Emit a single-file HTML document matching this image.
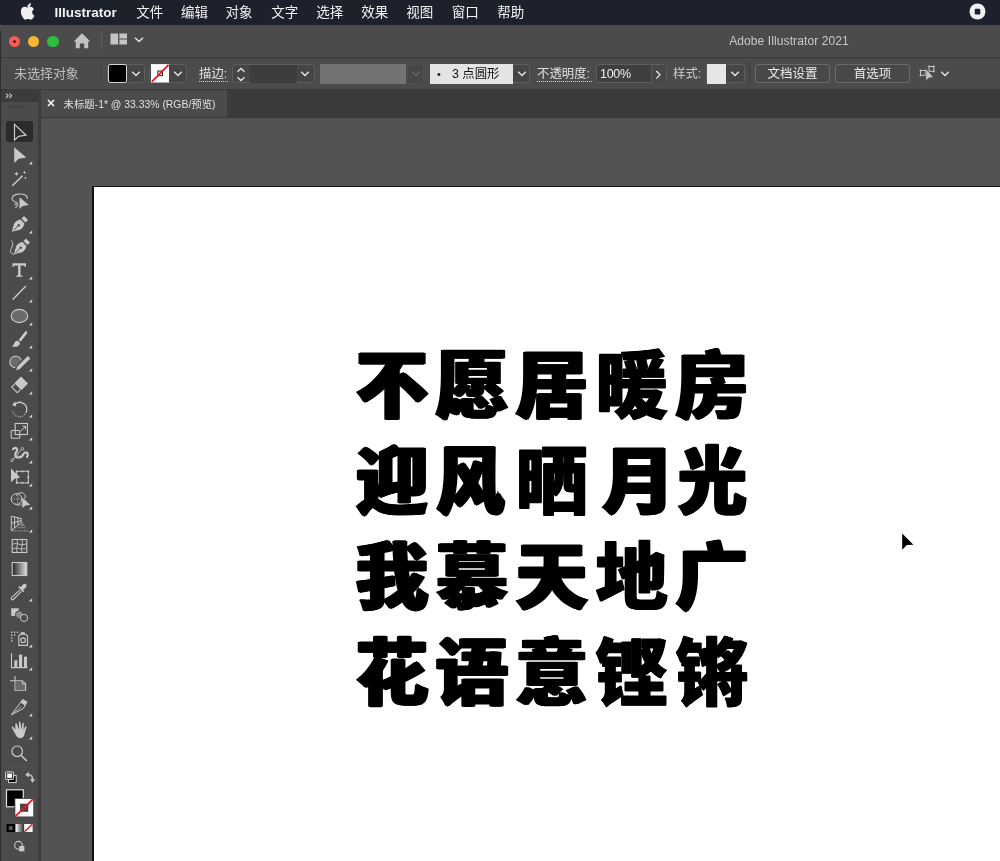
<!DOCTYPE html>
<html lang="zh-CN">
<head>
<meta charset="utf-8">
<title>Adobe Illustrator 2021</title>
<style>
*{box-sizing:border-box;margin:0;padding:0}
html,body{width:1000px;height:861px;overflow:hidden;background:#535353}
body{position:relative;font-family:"Liberation Sans","Noto Sans CJK SC",sans-serif;color:#d6d6d6;-webkit-font-smoothing:antialiased}
.abs{position:absolute}
#menubar,#titlebar,#ctrl,#tabbar,.line{will-change:transform}
/* ---------- mac menu bar ---------- */
#menubar{position:absolute;left:0;top:0;width:1000px;height:24.600px;background:#1c212b;z-index:5}
#menubar span{position:absolute;top:1px;height:24px;line-height:23px;font-size:13.500px;color:#f2f2f2;white-space:nowrap}
#menubar .app{font-weight:bold;font-size:13.500px;top:.8px}
/* ---------- window title bar ---------- */
#titlebar{position:absolute;left:0;top:24px;width:1000px;height:34px;background:#4b4b4b;border-top-left-radius:6px;border-bottom:1px solid #3b3b3b}
#titlebar .tl{position:absolute;top:11.800px;width:11.600px;height:11.600px;border-radius:50%}
#apptitle{position:absolute;left:689px;top:.6px;width:200px;height:33px;line-height:32px;text-align:center;font-size:12px;color:#c9c9c9;letter-spacing:.1px}
/* ---------- control bar ---------- */
#ctrl{position:absolute;left:0;top:58px;width:1000px;height:32px;background:#4b4b4b;border-top:1px solid #4b4b4b;border-bottom:1px solid #3b3b3b}
#ctrl .t{position:absolute;top:.5px;height:30px;line-height:29px;font-size:12px;color:#cfcfcf;white-space:nowrap}
#ctrl .box{position:absolute;top:4.500px;height:19.500px;border:1px solid #5e5e5e;border-radius:3px;background:#454545}
#ctrl .btn{position:absolute;top:4.700px;height:19.600px;border:1px solid #6a6a6a;border-radius:3px;background:#484848;color:#eaeaea;font-size:12.5px;line-height:18px;text-align:center}
.chev{position:absolute;width:10px;height:6px}
/* ---------- tab bar ---------- */
#tabbar{position:absolute;left:38px;top:90px;width:962px;height:28px;background:#3b3b3b}
#tab{position:absolute;left:3px;top:0;width:186px;height:27px;background:#4b4b4b;font-size:10.400px;line-height:27px;color:#e0e0e0;white-space:nowrap}
/* ---------- tools ---------- */
#tools{position:absolute;left:0;top:90px;width:41px;height:771px;background:#4b4b4b;border-left:1px solid #3b3b3b;border-right:3px solid #3d3d3d}
#tools .hd{position:absolute;left:0;top:0;width:37px;height:11.500px;background:#3b3b3b}
/* ---------- canvas ---------- */
#canvas{position:absolute;left:41px;top:118px;width:959px;height:743px;background:#535353}
#artboard{position:absolute;left:92.400px;top:186px;width:920px;height:700px;background:#111}
#artboard i{position:absolute;left:1.400px;top:1.100px;width:920px;height:700px;background:#fff}
.line{position:absolute;left:355.5px;white-space:nowrap;font-family:"Liberation Sans","Noto Sans CJK SC",sans-serif;font-weight:900;font-size:72px;line-height:96px;height:96px;color:#000;letter-spacing:7.9px;-webkit-text-stroke:.8px #000}
.line span{text-shadow:1px 0 0 #000,-1px 0 0 #000,2px 0 0 #000,-2px 0 0 #000}
.line .v{-webkit-text-stroke-width:1px;text-shadow:1px 0 0 #000,-1px 0 0 #000}.line .h{-webkit-text-stroke-width:1.200px}.line .m{-webkit-text-stroke-width:.8px}.line .l{-webkit-text-stroke-width:.4px}
</style>
</head>
<body>
<div id="canvas"></div>
<div id="artboard"><i></i></div>
<div class="line" style="top:338.400px;transform:scaleY(1.03);transform-origin:50% 47.600%"><span class="h">不</span><span class="l">愿</span><span class="m">居</span><span class="v">暖</span><span class="m">房</span></div>
<div class="line" style="top:433.900px;transform:scaleY(1.025);transform-origin:50% 47.600%"><span class="h">迎</span><span class="h" style="display:inline-block;transform:scaleX(.94);transform-origin:8% 50%">风</span><span class="v">晒</span><span class="h" style="position:relative;left:6.5px">月</span><span class="h" style="display:inline-block;transform:scaleX(.95);transform-origin:55% 50%">光</span></div>
<div class="line" style="top:530.300px;transform:scaleY(1.012);transform-origin:50% 47.600%"><span class="h">我</span><span class="l">慕</span><span class="h">天</span><span class="v">地</span><span class="h">广</span></div>
<div class="line" style="top:625.600px;transform:scaleY(1.012);transform-origin:50% 47.600%"><span class="h">花</span><span class="m">语</span><span class="l">意</span><span class="v">铿</span><span class="v">锵</span></div>

<svg class="abs" style="left:895px;top:528px" width="24" height="28" viewBox="895 528 24 28"><path d="M902.200 533.600V549.700L906.900 545 913.400 544.800z" fill="#000"/></svg>

<div id="menubar">
  <svg class="abs" style="left:20.400px;top:2.600px" width="16.200" height="18.400" viewBox="0 0 15 17"><path fill="#f0f0f0" d="M10.1 0.3c.1 1-.3 1.9-.9 2.6-.6.7-1.500 1.200-2.400 1.100-.1-.900.300-1.900.900-2.500.600-.700 1.600-1.200 2.400-1.200zM12.900 5.700c-.100.100-1.600.900-1.600 2.800 0 2.200 1.900 2.900 2 3-.000.100-.300 1.100-1 2.100-.600.900-1.300 1.800-2.300 1.800-1 0-1.300-.600-2.400-.600-1.200 0-1.500.600-2.500.600-1 0-1.700-.900-2.300-1.800C1.600 12.100.800 9.800.800 7.700c0-3 1.900-4.200 3.600-4.200 1 0 1.900.700 2.500.700.600 0 1.600-.700 2.800-.700.400 0 2 .100 3.200 2.200z"/></svg>
  <svg class="abs" style="left:969px;top:3px" width="17" height="17" viewBox="0 0 17 17"><circle cx="8.500" cy="8.500" r="8" fill="#eef0f2"/><rect x="5.700" y="5.800" width="5.600" height="5.600" rx="1.200" fill="#1c212b"/></svg>
  <span class="app" style="left:54.500px">Illustrator</span>
  <span style="left:136.3px">文件</span>
  <span style="left:181px">编辑</span>
  <span style="left:225.5px">对象</span>
  <span style="left:271.3px">文字</span>
  <span style="left:316.3px">选择</span>
  <span style="left:361.3px">效果</span>
  <span style="left:406.3px">视图</span>
  <span style="left:451.8px">窗口</span>
  <span style="left:497.3px">帮助</span>
</div>

<div id="titlebar">
  <div class="tl" style="left:8.850px;background:#ee5f58"></div>
  <div class="tl" style="left:27.900px;background:#f6b62d"></div>
  <div class="tl" style="left:47.200px;background:#2bbd3f"></div>
  <div class="abs" style="left:12.900px;top:15.900px;width:3.500px;height:3.500px;border-radius:50%;background:#7a0c08"></div>
  <svg class="abs" style="left:73px;top:9px" width="18" height="16" viewBox="0 0 18 16"><path fill="#c2c2c2" d="M9 .3 17.300 8.400h-2.100v6.800h-4v-4.800H6.800v4.800h-4V8.400H.700z"/></svg>
  <div class="abs" style="left:101px;top:7px;width:1px;height:19px;background:#5c5c5c"></div>
  <svg class="abs" style="left:110px;top:9px" width="18" height="13" viewBox="0 0 18 13"><g fill="#c4c4c4"><rect x=".5" y=".5" width="7.600" height="11"/><rect x="9.400" y=".5" width="7.600" height="5"/><rect x="9.400" y="6.500" width="7.600" height="5"/></g></svg>
  <svg class="abs chev" style="left:134px;top:13px" viewBox="0 0 10 6"><path d="M1 .8 5 4.600 9 .8" fill="none" stroke="#e6e6e6" stroke-width="1.400"/></svg>
  <div id="apptitle">Adobe Illustrator 2021</div>
</div>

<div id="ctrl">
  <div class="abs" style="left:6px;top:6px;width:1px;height:19px;background:repeating-linear-gradient(#3c3c3c 0 1px,transparent 1px 2px)"></div>
  <span class="t" style="left:14.300px;top:-.2px;color:#bdbdbd;font-size:12.900px">未选择对象</span>
  <div class="abs" style="left:101px;top:5px;width:1px;height:21px;background:repeating-linear-gradient(#404040 0 1px,transparent 1px 2px)"></div>

  <div class="box" style="left:107px;width:38px"></div>
  <div class="abs" style="left:108.300px;top:5px;width:18.800px;height:18.800px;background:#000;border:1.300px solid #d2d2d2;border-radius:2px"></div>
  <svg class="abs chev" style="left:131px;top:12px" viewBox="0 0 10 6"><path d="M1.200 .8 5 4.500 8.800 .8" fill="none" stroke="#e6e6e6" stroke-width="1.400"/></svg>
  <div class="box" style="left:149px;width:38px"></div>
  <svg class="abs" style="left:150.800px;top:5px" width="18.400" height="18.600" viewBox="0 0 20 20"><rect width="20" height="20" fill="#fff"/><rect x="7.500" y="7.500" width="5" height="5" fill="none" stroke="#333" stroke-width="1.200"/><path d="M1 19 19 1" stroke="#f0141e" stroke-width="2"/></svg>
  <svg class="abs chev" style="left:173px;top:12px" viewBox="0 0 10 6"><path d="M1.200 .8 5 4.500 8.800 .8" fill="none" stroke="#e6e6e6" stroke-width="1.400"/></svg>

  <span class="t" style="left:199px;font-size:12.400px;color:#e0e0e0">描边:</span>
  <div class="abs" style="left:199px;top:22px;width:29px;height:1px;background:repeating-linear-gradient(90deg,#d0d0d0 0 1px,transparent 1px 2px)"></div>
  <div class="box" style="left:232px;width:83px"></div>
  <svg class="abs" style="left:236px;top:8px" width="10" height="15" viewBox="0 0 10 15"><path d="M1.500 4.800 5 1.500 8.500 4.800M1.500 10.200 5 13.500 8.500 10.200" fill="none" stroke="#e6e6e6" stroke-width="1.300"/></svg>
  <div class="abs" style="left:250px;top:6px;width:47px;height:18px;background:repeating-linear-gradient(90deg,#404040 0 1px,#3a3a3a 1px 2px)"></div>
  <svg class="abs chev" style="left:300px;top:12px" viewBox="0 0 10 6"><path d="M1.200 .8 5 4.500 8.800 .8" fill="none" stroke="#e6e6e6" stroke-width="1.400"/></svg>

  <div class="abs" style="left:320px;top:5px;width:86px;height:20px;background:#737373"></div>
  <div class="abs" style="left:407px;top:5px;width:17px;height:20px;background:#474747;border:1px dotted #565656"></div>
  <svg class="abs chev" style="left:411px;top:12px" viewBox="0 0 10 6"><path d="M1.200 .8 5 4.500 8.800 .8" fill="none" stroke="#666" stroke-width="1.400"/></svg>

  <div class="abs" style="left:430px;top:5px;width:83px;height:20px;background:#e4e4e4;color:#111;font-size:12.400px;line-height:19px;white-space:nowrap"><span class="abs" style="left:7px;top:.6px;font-size:11px">•</span><span class="abs" style="left:22px;top:1px">3 点圆形</span></div>
  <div class="box" style="left:513px;width:17px;border-radius:0 3px 3px 0;border-left:none"></div>
  <svg class="abs chev" style="left:517px;top:12px" viewBox="0 0 10 6"><path d="M1.200 .8 5 4.500 8.800 .8" fill="none" stroke="#e6e6e6" stroke-width="1.400"/></svg>

  <span class="t" style="left:537px;font-size:12.400px;color:#e0e0e0">不透明度:</span>
  <div class="abs" style="left:537px;top:22px;width:55px;height:1px;background:repeating-linear-gradient(90deg,#d0d0d0 0 1px,transparent 1px 2px)"></div>
  <div class="box" style="left:596px;width:71px;background:#3f3f3f"></div>
  <div class="abs" style="left:651px;top:6px;width:15px;height:18px;background:#474747;border-left:1px solid #5a5a5a"></div>
  <span class="t" style="left:600px;color:#f0f0f0;font-size:12.500px;letter-spacing:-.3px">100%</span>
  <svg class="abs" style="left:654.500px;top:10.500px" width="7" height="10" viewBox="0 0 7 10"><path d="M1.300 1 5 4.800 1.300 8.600" fill="none" stroke="#e6e6e6" stroke-width="1.300"/></svg>

  <span class="t" style="left:673px;font-size:12.400px;color:#c8c8c8">样式:</span>
  <div class="box" style="left:706px;width:39px"></div>
  <div class="abs" style="left:707px;top:5px;width:19px;height:20px;background:#e6e6e6"></div>
  <svg class="abs chev" style="left:730px;top:12px" viewBox="0 0 10 6"><path d="M1.200 .8 5 4.500 8.800 .8" fill="none" stroke="#e6e6e6" stroke-width="1.400"/></svg>
  <div class="abs" style="left:749px;top:4px;width:1px;height:22px;background:#3c3c3c"></div>

  <div class="btn" style="left:755px;width:75px">文档设置</div>
  <div class="btn" style="left:835px;width:75px">首选项</div>
  <svg class="abs" style="left:919px;top:6px" width="18" height="18" viewBox="0 0 18 18"><g fill="none" stroke="#c8c8c8" stroke-width="1"><rect x="1.500" y="5.500" width="4.800" height="4.800"/><rect x="10" y="1.500" width="4.800" height="4.800"/><path d="M.3 5.500H1.500M1.500 4.300V5.500M.3 10.300H1.500M1.500 10.300V11.500M6.300 4.300V5.500M8.800 1.500H10M10 .3V1.500M14.800 .3V1.500M14.800 1.500H16M14.800 6.300H16M14.800 6.300V7.500" stroke-width=".8"/></g><path d="M6.900 3.800V15.800L10 12.700 14.300 12.200z" fill="#c8c8c8" stroke="#4b4b4b" stroke-width=".5"/></svg>
  <svg class="abs chev" style="left:940px;top:12px" viewBox="0 0 10 6"><path d="M1.200 .8 5 4.500 8.800 .8" fill="none" stroke="#e6e6e6" stroke-width="1.400"/></svg>
</div>

<div id="tabbar"><div id="tab"><svg class="abs" style="left:5.700px;top:9.300px" width="8" height="8" viewBox="0 0 8 8"><path d="M1 1 7 7M7 1 1 7" stroke="#f4f4f4" stroke-width="1.700"/></svg><span style="position:absolute;left:22.500px;top:.5px">未标题-1* @ 33.33% (RGB/预览)</span></div></div>

<div id="tools"><div class="hd"></div></div>
<div class="abs" style="left:0;top:31px;width:1px;height:830px;background:#2e2e2e"></div>
<svg class="abs" style="left:0;top:0" width="38" height="861" viewBox="0 0 38 861"><defs><linearGradient id="gr" x1="0" x2="1" y1="0" y2="0"><stop offset="0" stop-color="#222"/><stop offset="1" stop-color="#e0e0e0"/></linearGradient><linearGradient id="gr2" x1="0" x2="1"><stop offset="0" stop-color="#fff"/><stop offset="1" stop-color="#333"/></linearGradient></defs>
<path d="M6 93.600 8.300 95.800 6 98M9.400 93.600 11.700 95.800 9.400 98" fill="none" stroke="#c9c9c9" stroke-width="1.100"/>
<path d="M9 106.800H28" stroke="#404040" stroke-width="3.400" stroke-dasharray="1 1"/>
<rect x="6" y="121" width="27" height="21" rx="2.500" fill="#2b2b2b"/><path d="M14.500 124.300V140.200L18.600 136.300 26 135.200z" fill="none" stroke="#c9c9c9" stroke-width="1.200" stroke-linejoin="miter"/>
<path d="M14.200 147.200V163L18.700 158.800 26.300 157.600z" fill="#c9c9c9"/><path d="M28.800 164.6H32.200V161.2z" fill="#d4d4d4"/>
<path d="M12.300 185.800 22.600 175.700" stroke="#c9c9c9" stroke-width="1.500" fill="none"/><path d="M16.500 171.500l.7 1.600 1.600.7-1.600.7-.7 1.600-.7-1.600-1.600-.7 1.600-.7zM24.500 170.600l.5 1.300 1.300.5-1.300.5-.5 1.300-.5-1.300-1.300-.5 1.300-.5zM25.300 176.700l.4.900.9.400-.9.400-.4.900-.4-.9-.9-.4.900-.4z" fill="#c9c9c9"/>
<path d="M17 202.500C13 201.500 11.200 199.300 12.300 197.200 13.500 194.600 18.500 193.300 23 194.300 26.300 195.100 27.800 197 27.200 199" fill="none" stroke="#c9c9c9" stroke-width="1.100"/><path d="M16.800 202.400c1.200 1.100.8 2.800-.600 2.900-1.200.100-1.800-1.300-.900-2 1.700-1.200 3.300 1.500 1.800 3.400-.500.700-1.300 1.100-2.100 1.100" fill="none" stroke="#c9c9c9" stroke-width="1"/><path d="M19.500 197.200V209L22.700 205.900 28.800 205z" fill="#c9c9c9"/>
<g transform="translate(11.8 216)"><path d="M0 15.800 2.300 7.800C3.300 5.600 6.200 4 8.600 3.500L12.600 7.500C12.100 10 10.500 12.800 8.300 13.800zM1.900 14.600 6.400 10.100" fill="#c9c9c9"/><path d="M1.700 14.400 6.300 9.800" stroke="#4b4b4b" stroke-width=".9"/><circle cx="6.900" cy="9.200" r="1.200" fill="#4b4b4b"/><path d="M9.700 2.500 12.200 0 16.200 4 13.700 6.500z" fill="#c9c9c9"/></g><path d="M28.800 233.6H32.200V230.2z" fill="#d4d4d4"/>
<g transform="translate(13.8 238.5)"><path d="M0 15.800 2.300 7.800C3.300 5.600 6.200 4 8.600 3.500L12.600 7.500C12.100 10 10.500 12.800 8.300 13.800zM1.900 14.600 6.400 10.100" fill="#c9c9c9"/><path d="M1.700 14.400 6.300 9.800" stroke="#4b4b4b" stroke-width=".9"/><circle cx="6.900" cy="9.200" r="1.200" fill="#4b4b4b"/><path d="M9.700 2.500 12.200 0 16.200 4 13.700 6.500z" fill="#c9c9c9"/></g><path d="M11 240.500C14.500 243 12 246.500 10.800 249.500 9.800 252.500 11.800 254.500 14.300 254.300" fill="none" stroke="#c9c9c9" stroke-width="1"/>
<path d="M12.500 263.200H26V266.800H24.800C24.700 265.800 24.300 265.400 23.300 265.400H20.500V274.600C20.500 275.400 20.900 275.700 22.500 275.800V276.800H16.200V275.800C17.700 275.700 18.100 275.400 18.100 274.600V265.400H15.300C14.300 265.400 13.900 265.800 13.800 266.800H12.500z" fill="#c9c9c9"/><path d="M28.800 279.6H32.200V276.2z" fill="#d4d4d4"/>
<path d="M12.700 299.500 26 286" stroke="#c9c9c9" stroke-width="1.400"/><path d="M28.800 302.6H32.200V299.2z" fill="#d4d4d4"/>
<ellipse cx="19.400" cy="316" rx="8.300" ry="6.600" fill="#6b6b6b" stroke="#c9c9c9" stroke-width="1.100"/><path d="M28.800 325.6H32.200V322.2z" fill="#d4d4d4"/>
<path d="M26.800 331.200C27.600 331.700 27.400 333 26.500 334.300L20.800 341.600 18.600 339.900 24.400 332.600C25.300 331.400 26.200 330.800 26.800 331.200z" fill="#c9c9c9"/><path d="M17.800 340.800 19.800 342.400C20.300 344.500 18.300 346.800 15.500 346.800 14 346.900 12.500 346.700 11.800 346.200 13.600 345.500 13.900 344.500 14.300 343.100 14.800 341.300 16.300 340.400 17.800 340.800z" fill="#c9c9c9"/><path d="M28.800 348.6H32.200V345.2z" fill="#d4d4d4"/>
<path d="M15.300 367.800A5.800 5.800 0 1 1 21.200 360.300" fill="#6b6b6b" stroke="#c9c9c9" stroke-width="1.100"/><path d="M27.900 356 30.300 358.400 19.800 368.900 16.100 370.200 17.400 366.500z" fill="#c9c9c9"/><path d="M28.800 371.6H32.200V368.2z" fill="#d4d4d4"/>
<path d="M21 376.600 28 383.600 21.400 390.200 14.400 383.200z" fill="#c9c9c9"/><path d="M14.600 384.200 11.700 387.100 17.300 392.700 20.200 389.800" fill="none" stroke="#c9c9c9" stroke-width="1.100"/><path d="M28.800 394.600H32.200V391.200z" fill="#d4d4d4"/>
<path d="M14.500 404.800A7 7 0 0 1 26.800 409.500 7 7 0 0 1 25.800 413" fill="none" stroke="#c9c9c9" stroke-width="1.300"/><path d="M12 405.200 15.200 401.300 16.300 406.500z" fill="#c9c9c9"/><path d="M25 414.200A7 7 0 0 1 12.600 410.500" fill="none" stroke="#c9c9c9" stroke-width="1.200" stroke-dasharray="1 1.400"/><path d="M28.800 417.6H32.200V414.2z" fill="#d4d4d4"/>
<rect x="15.200" y="423.500" width="12.200" height="11" fill="none" stroke="#c9c9c9" stroke-width="1.100"/><rect x="11.200" y="430.500" width="8.600" height="7.800" rx=".8" fill="none" stroke="#c9c9c9" stroke-width="1.100"/><path d="M21 431 25.200 426.600M22.500 426.300H25.500V429.300" fill="none" stroke="#c9c9c9" stroke-width="1"/><path d="M28.800 440.6H32.200V437.2z" fill="#d4d4d4"/>
<path d="M13 449.200C14.200 447.200 16.800 447.400 17.200 449.600 17.600 451.800 14.500 452.500 15.300 455.300 16.300 458.500 21.600 458.200 23.300 454.200 24.300 451.800 27.300 451.600 27.800 454.300 28.100 455.600 27.400 456.500 27 457" fill="none" stroke="#c9c9c9" stroke-width="2.200" stroke-linecap="round"/><path d="M12.200 460.200 22.200 448.800" stroke="#c9c9c9" stroke-width=".9"/><circle cx="12" cy="460.300" r="1.300" fill="#4b4b4b" stroke="#c9c9c9" stroke-width=".8"/><circle cx="22.300" cy="448.800" r="1.300" fill="#4b4b4b" stroke="#c9c9c9" stroke-width=".8"/><circle cx="17.200" cy="454.500" r="1.100" fill="#4b4b4b" stroke="#c9c9c9" stroke-width=".7"/><path d="M28.800 463.6H32.200V460.2z" fill="#d4d4d4"/>
<rect x="16.700" y="471.300" width="11.600" height="11.600" fill="none" stroke="#c9c9c9" stroke-width="1"/><g fill="#c9c9c9"><rect x="15.900" y="470.500" width="1.800" height="1.800"/><rect x="27.300" y="470.500" width="1.800" height="1.800"/><rect x="15.900" y="481.900" width="1.800" height="1.800"/><rect x="27.300" y="481.900" width="1.800" height="1.800"/><rect x="21.600" y="470.500" width="1.800" height="1.800"/><rect x="21.600" y="481.900" width="1.800" height="1.800"/><rect x="27.300" y="476.200" width="1.800" height="1.800"/></g><path d="M11 468.500V482.300L14.600 478.800 20.200 477.500z" fill="#c9c9c9"/><path d="M28.800 486.6H32.200V483.2z" fill="#d4d4d4"/>
<circle cx="16.500" cy="499" r="5.300" fill="none" stroke="#c9c9c9" stroke-width="1"/><path d="M16.300 495.800C17.300 492.500 22.500 491.600 24.500 494.400 25.800 496.300 25.300 498 24.600 498.800" fill="none" stroke="#c9c9c9" stroke-width="1"/><path d="M15 503.800C17 505.800 20.500 505.300 21.700 503.800" fill="none" stroke="#c9c9c9" stroke-width="1"/><path d="M12.300 499H20.500M17.800 494.500V503.500" stroke="#c9c9c9" stroke-width=".7" stroke-dasharray="1 .8"/><path d="M22.300 497.600V508.300L25.200 505.500 30.200 504.900z" fill="#c9c9c9"/><path d="M28.800 509.6H32.200V506.2z" fill="#d4d4d4"/>
<path d="M11.300 516.200V530.600L21.200 522.700V518.600zM14.600 517V528M18 517.800V525.300M11.300 523.300 21.200 520.600" fill="none" stroke="#c9c9c9" stroke-width="1"/><path d="M12 530.900H28" stroke="#c9c9c9" stroke-width=".8" stroke-dasharray="1.400 1"/><path d="M17.500 527.700H26M20 525H24M21.500 523 23 523" stroke="#8a8a8a" stroke-width=".9"/><path d="M22.600 522.300 25.300 526.200H20.200z" fill="#7c7c7c"/><path d="M28.800 532.6H32.200V529.2z" fill="#d4d4d4"/>
<rect x="12.200" y="539.500" width="14.600" height="13" fill="none" stroke="#c9c9c9" stroke-width="1.100"/><path d="M12.500 544.500C16 541.500 20 546.500 26.500 543.800M12.500 549.200C16 546.200 21 551 26.500 548M16.800 539.800C19 543.500 15 548.500 17.300 552.300M21.800 539.800C24 543.500 20 548.500 22.300 552.300" fill="none" stroke="#c9c9c9" stroke-width=".9"/>
<rect x="12.200" y="562.500" width="14.600" height="13" fill="url(#gr)" stroke="#c9c9c9" stroke-width="1.100"/>
<path d="M21.500 591.300 13.300 599.500C12.700 600.100 11.300 600 11.200 598.500 11.200 598 11.500 597.500 11.900 597.100L20.100 589.900" fill="none" stroke="#c9c9c9" stroke-width="1.100"/><path d="M19.300 588.300 23.200 592.200 24.300 591.100 23.200 590 25.800 587.500C26.800 586.500 26.800 585 26 584.300 25.200 583.600 23.900 583.700 23 584.600L20.500 587.200 19.400 586.100 18.300 587.200z" fill="#c9c9c9"/><path d="M28.800 601.6H32.200V598.2z" fill="#d4d4d4"/>
<rect x="11.200" y="608.300" width="7.600" height="7.600" fill="#c9c9c9"/><circle cx="19.300" cy="614.700" r="3.900" fill="#8c8c8c" stroke="#4b4b4b" stroke-width="1"/><circle cx="24" cy="617.900" r="3.600" fill="#4b4b4b" stroke="#c9c9c9" stroke-width="1"/>
<g fill="#c9c9c9"><rect x="11" y="631.500" width="1.400" height="1.400"/><rect x="13.900" y="631.500" width="1.400" height="1.400"/><rect x="16.800" y="631.500" width="1.400" height="1.400"/><rect x="11" y="634.400" width="1.400" height="1.400"/><rect x="13.900" y="634.400" width="1.400" height="1.400"/><rect x="11" y="637.300" width="1.400" height="1.400"/><rect x="11" y="640.200" width="1.400" height="1.400"/></g><path d="M20.800 632.200H24.800V634H20.800z" fill="#c9c9c9"/><path d="M18.800 636.800C18.800 635.400 20 634.200 21.500 634.200H24.500C26.200 634.200 27.500 635.400 27.500 636.800V645.400H18.800z" fill="none" stroke="#c9c9c9" stroke-width="1.100"/><circle cx="23.100" cy="640.200" r="2.300" fill="none" stroke="#c9c9c9" stroke-width="1.100"/><path d="M28.800 647.6H32.200V644.2z" fill="#d4d4d4"/>
<path d="M11.500 653V667.600H27.500" fill="none" stroke="#c9c9c9" stroke-width="1.100"/><rect x="14.300" y="660.300" width="3" height="6.800" fill="#c9c9c9"/><rect x="19" y="654.600" width="3.200" height="12.500" fill="#c9c9c9"/><rect x="24" y="656.600" width="3" height="10.500" fill="#c9c9c9"/><path d="M28.800 670.6H32.200V667.2z" fill="#d4d4d4"/>
<path d="M15 676V690.300H25.600V683.800L22.300 680.800H10" fill="none" stroke="#c9c9c9" stroke-width="1.100"/><path d="M15.600 681.400H22L25 684.200V689.700H15.600z" fill="#6b6b6b"/><path d="M22.200 680.800V684H25.600" fill="none" stroke="#c9c9c9" stroke-width=".9"/>
<path d="M11.300 714.800 22.800 699.400 27 702 23.300 708.600z" fill="none" stroke="#c9c9c9" stroke-width="1"/><path d="M22.800 699.400 27 702 25 705.600 20.500 702.600z" fill="#c9c9c9"/><path d="M11.300 714.800 21.500 706.500" stroke="#c9c9c9" stroke-width=".8"/><path d="M28.800 716.6H32.200V713.2z" fill="#d4d4d4"/>
<path d="M15.200 729.700C14.400 728.600 13.500 727.200 12.600 726.600 11.800 726.100 11.500 727.200 12 728.100L16 735.300C17 737.300 18.500 738.200 20.300 738.200 22.300 738.200 23.800 737 24.300 734.800L26.500 727.300C26.800 726.200 25.500 725.700 25.100 726.800L23.600 730.300 23.800 723.600C23.800 722.500 22.400 722.400 22.300 723.600L21.500 729.600 20.400 722.300C20.200 721.200 18.800 721.400 18.900 722.500L19.100 729.700 16.800 723.800C16.400 722.800 15.100 723.300 15.400 724.400z" fill="#c9c9c9"/><path d="M28.800 739.6H32.200V736.2z" fill="#d4d4d4"/>
<circle cx="17.200" cy="751.300" r="5.300" fill="none" stroke="#c9c9c9" stroke-width="1.200"/><path d="M21 755.300 26.800 761" stroke="#c9c9c9" stroke-width="1.600"/>
<path d="M6 767.200H33" stroke="#5f5f5f" stroke-width="1" stroke-dasharray="1 1.500"/>
<rect x="8.600" y="775.600" width="7.600" height="7" fill="#000" stroke="#d8d8d8" stroke-width="1"/><rect x="5.600" y="771.900" width="8" height="7.600" rx=".8" fill="#3a3a3a" stroke="#d8d8d8" stroke-width="1"/><rect x="7.200" y="773.500" width="4.800" height="4.400" fill="#fff"/>
<path d="M27.200 774.500C31.500 774.200 32.800 776.800 32.500 779.800" fill="none" stroke="#c9c9c9" stroke-width="1.500"/><path d="M25.300 774.700 28.800 771.800V777.500zM30 779.200H35.200L32.600 782.800z" fill="#c9c9c9"/>
<rect x="6.500" y="789.800" width="16.800" height="17" fill="#000" stroke="#e0e0e0" stroke-width="1.200"/>
<rect x="14.400" y="798" width="19.600" height="19.300" fill="#3a3a3a"/>
<rect x="15.300" y="798.900" width="18" height="17.600" fill="#fff"/><rect x="20.200" y="803.800" width="8" height="7.800" fill="#4b4b4b"/><rect x="20.700" y="804.300" width="7" height="6.800" fill="none" stroke="#3a3a3a" stroke-width=".8"/><path d="M15.600 816.200 33 799.200" stroke="#f3131c" stroke-width="1.800"/>
<rect x="6.600" y="824" width="8.400" height="8" fill="#000"/><rect x="8.800" y="826.200" width="3.800" height="3.800" fill="#5a5a5a"/>
<rect x="15.600" y="824" width="8" height="8" fill="url(#gr2)"/>
<rect x="24.200" y="824" width="8.400" height="8" fill="#fff"/><path d="M24.500 831.700 32.300 824.300" stroke="#f3131c" stroke-width="1.500"/>
<circle cx="18.500" cy="845.300" r="3.900" fill="none" stroke="#c9c9c9" stroke-width="1.100"/><rect x="19.200" y="846" width="5.200" height="5.400" fill="#c9c9c9"/>
</svg>
</body>
</html>
